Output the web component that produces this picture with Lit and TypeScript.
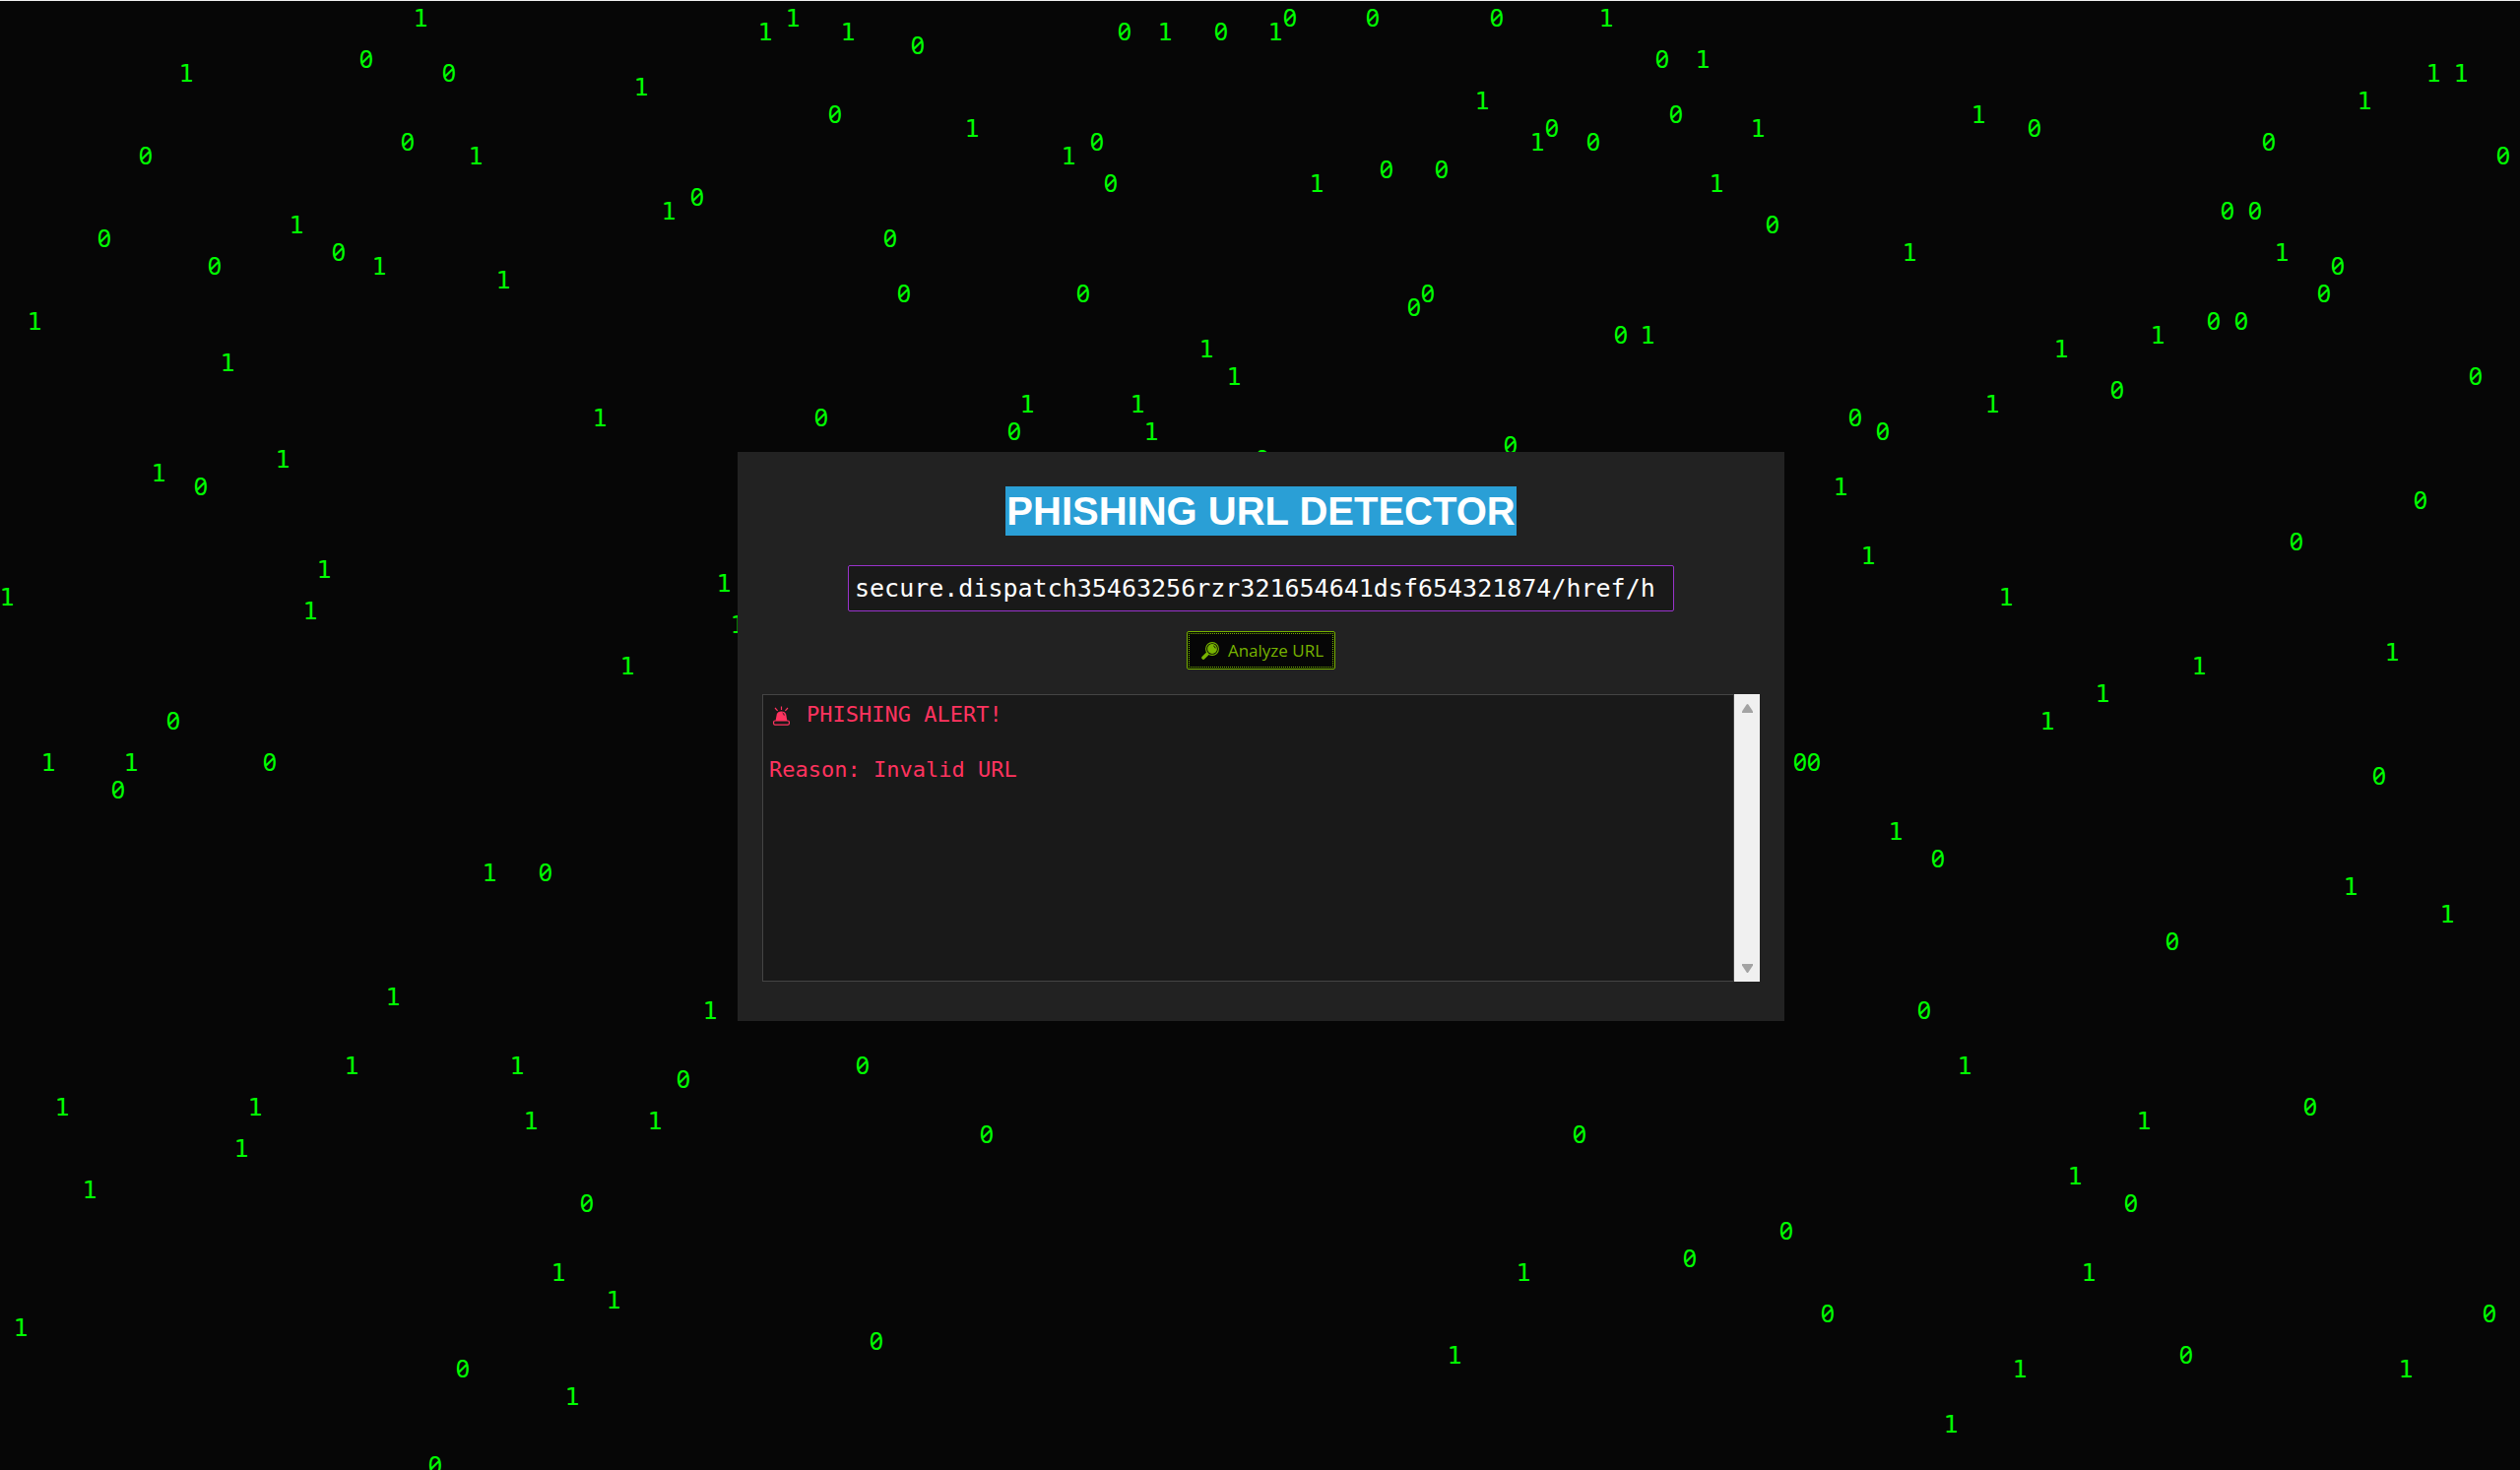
import { LitElement, html, css, svg } from "lit";
import { customElement, state, query } from "lit/decorators.js";

// Each entry is one falling digit: [column, row, digit], on a 14px lattice.
type Drop = [number, number, 0 | 1];

const CELL = 14;

const DROPS: Drop[] = [
  [0, 42, 1], [1, 95, 1], [2, 22, 1], [3, 54, 1], [4, 79, 1], [6, 85, 1], [7, 16, 0], [8, 56, 0],
  [9, 54, 1], [10, 10, 0], [11, 33, 1], [12, 51, 0], [13, 4, 1], [14, 34, 0], [15, 18, 0], [16, 25, 1],
  [17, 82, 1], [18, 79, 1], [19, 54, 0], [20, 32, 1], [21, 15, 1], [22, 43, 1], [23, 40, 1], [24, 17, 0],
  [25, 76, 1], [26, 3, 0], [27, 18, 1], [28, 71, 1], [29, 9, 0], [30, 0, 1], [31, 105, 0], [32, 4, 0],
  [33, 98, 0], [34, 10, 1], [35, 62, 1], [36, 19, 1], [37, 76, 1], [38, 80, 1], [39, 62, 0], [40, 91, 1],
  [41, 100, 1], [42, 86, 0], [43, 29, 1], [44, 93, 1], [45, 47, 1], [46, 5, 1], [47, 80, 1], [48, 14, 1],
  [49, 77, 0], [50, 13, 0], [51, 72, 1], [52, 41, 1], [53, 44, 1], [55, 1, 1], [57, 0, 1], [59, 29, 0],
  [60, 7, 0], [61, 1, 1], [62, 76, 0], [63, 96, 0], [64, 16, 0], [65, 20, 0], [66, 2, 0], [70, 8, 1],
  [71, 81, 0], [73, 30, 0], [74, 28, 1], [77, 10, 1], [78, 20, 0], [79, 9, 0], [80, 12, 0], [81, 1, 0],
  [82, 28, 1], [83, 30, 1], [84, 1, 1], [87, 24, 1], [88, 1, 0], [89, 26, 1], [91, 32, 0], [92, 1, 1],
  [93, 0, 0], [95, 12, 1], [99, 0, 0], [100, 11, 0], [102, 21, 0], [103, 20, 0], [104, 11, 0], [105, 97, 1],
  [107, 6, 1], [108, 0, 0], [109, 31, 0], [110, 91, 1], [111, 9, 1], [112, 8, 0], [114, 81, 0], [115, 9, 0],
  [116, 0, 1], [117, 23, 0], [119, 23, 1], [120, 3, 0], [121, 7, 0], [122, 90, 0], [123, 3, 1], [124, 12, 1],
  [127, 8, 1], [128, 15, 0], [129, 88, 0], [130, 54, 0], [131, 54, 0], [132, 94, 0], [133, 34, 1], [134, 29, 0],
  [135, 39, 1], [136, 30, 0], [137, 59, 1], [138, 17, 1], [139, 72, 0], [140, 61, 0], [141, 102, 1], [142, 76, 1],
  [143, 7, 1], [144, 28, 1], [145, 42, 1], [146, 98, 1], [147, 8, 0], [148, 51, 1], [149, 24, 1], [150, 84, 1],
  [151, 91, 1], [152, 49, 1], [153, 27, 0], [154, 86, 0], [155, 80, 1], [156, 23, 1], [157, 67, 0], [158, 97, 0],
  [159, 47, 1], [160, 22, 0], [161, 14, 0], [162, 22, 0], [163, 14, 0], [164, 9, 0], [165, 17, 1], [166, 38, 0],
  [167, 79, 0], [168, 20, 0], [169, 18, 0], [170, 63, 1], [171, 6, 1], [172, 55, 0], [173, 46, 1], [174, 98, 1],
  [175, 35, 0], [176, 4, 1], [177, 65, 1], [178, 4, 1], [179, 26, 0], [180, 94, 0], [181, 10, 0],
];

@customElement("digit-rain")
export class DigitRain extends LitElement {
  static styles = css`
    :host {
      display: block;
      position: absolute;
      inset: 0;
      overflow: hidden;
    }
    .canvas {
      display: block;
      width: 100%;
      height: 100%;
      fill: #00ff00;
      font-size: 25px;
      text-anchor: middle;
    }
    .zero {
      font-family: "Noto Sans", sans-serif;
      font-feature-settings: "zero";
    }
    .one {
      font-family: "DejaVu Sans Mono", monospace;
    }
  `;

  render() {
    return html`<svg class="canvas" aria-hidden="true">
      ${DROPS.map(
        ([col, row, digit]) =>
          svg`<text class=${digit ? "one" : "zero"} x=${col * CELL + (digit ? 7 : 8)} y=${row * CELL + 26}>${digit}</text>`
      )}
    </svg>`;
  }
}

@customElement("app-root")
export class AppRoot extends LitElement {
  static styles = css`
    :host {
      display: block;
    }
    * {
      box-sizing: border-box;
    }
    .stage {
      position: relative;
      display: grid;
      place-items: center;
      min-height: 100vh;
      padding: 2px 0 0 2px;
      overflow: hidden;
      background: #060606;
      border-top: 1px solid #f0f0f0;
    }
    .panel {
      position: relative;
      display: flex;
      flex-direction: column;
      align-items: center;
      width: 100%;
      max-width: 1063px;
      padding: 35px 25px 40px;
      background: #222222;
    }
    .title {
      margin: 0 0 30px;
      padding: 2px 1px;
      background: #2a9fd6;
      color: #ffffff;
      font: bold 40px/46px "Liberation Sans", Arial, sans-serif;
    }
    .url {
      width: 100%;
      max-width: 839px;
      height: 47px;
      margin-bottom: 20px;
      padding: 0 6px;
      border: 1px solid #9933cc;
      border-radius: 2px;
      outline: none;
      background: #191919;
      color: #ffffff;
      font: 25px/45px "DejaVu Sans Mono", monospace;
    }
    .analyze {
      position: relative;
      display: flex;
      align-items: center;
      gap: 9px;
      height: 39px;
      margin-bottom: 25px;
      padding: 0 11px 0 14px;
      border: 1px solid #77b300;
      border-radius: 2px;
      background: #060606;
      color: #77b300;
      font: 17px/24px "Open Sans", "Noto Sans", sans-serif;
      cursor: pointer;
    }
    .analyze::after {
      content: "";
      position: absolute;
      inset: 1px;
      border: 1px dotted #77b300;
    }
    .lens {
      width: 18px;
      height: 18px;
    }
    .result {
      position: relative;
      display: flex;
      align-self: stretch;
      height: 292px;
    }
    .log {
      flex: 1;
      min-width: 0;
      margin: 0;
      padding: 6px;
      border: 1px solid #444444;
      border-radius: 0;
      outline: none;
      resize: none;
      overflow: hidden;
      background: #191919;
      color: #ff335f;
      font: 22px/28px "DejaVu Sans Mono", monospace;
      text-indent: 38px;
    }
    .siren {
      position: absolute;
      left: 11px;
      top: 12px;
      width: 17px;
      height: 20px;
      color: #ff335f;
    }
    .track {
      display: flex;
      flex-direction: column;
      justify-content: space-between;
      width: 26px;
      background: #f0f0f0;
    }
    .step {
      display: grid;
      place-items: center;
      height: 28px;
      padding: 0;
      border: 0;
      background: none;
      color: #a3a3a3;
    }
    .arrow {
      width: 11px;
      height: 9px;
    }
  `;

  @state() private url = "secure.dispatch35463256rzr321654641dsf654321874/href/h";
  @state() private report = "PHISHING ALERT!\n\nReason: Invalid URL";
  @query(".log") private log!: HTMLTextAreaElement;

  private scrollLog(lines: number) {
    this.log.scrollTop += lines * 28;
  }

  render() {
    return html`
      <main class="stage">
        <digit-rain></digit-rain>
        <section class="panel">
          <h1 class="title">PHISHING URL DETECTOR</h1>
          <input
            class="url"
            type="text"
            aria-label="URL"
            spellcheck="false"
            .value=${this.url}
            @input=${(e: Event) => (this.url = (e.target as HTMLInputElement).value)}
          />
          <button class="analyze" type="button">
            <svg class="lens" viewBox="0 0 18 18" aria-hidden="true">
              <path d="M6.6 11.4 L2 16" stroke="currentColor" stroke-width="3.6" stroke-linecap="round" />
              <circle cx="11" cy="7" r="6.4" fill="#060606" stroke="currentColor" stroke-width="1.1" />
              <circle cx="11" cy="7" r="4.9" fill="currentColor" />
              <path d="M12.2 3.9 Q14 4.6 14.2 6.4" fill="none" stroke="#060606" stroke-width="0.9" />
            </svg>
            Analyze URL
          </button>
          <div class="result">
            <textarea class="log" readonly aria-label="Result" .value=${this.report}></textarea>
            <svg class="siren" viewBox="0 0 17 20" aria-hidden="true">
              <path
                d="M8.5 0.5 V4 M2 2 L4.6 4.8 M15 2 L12.4 4.8"
                fill="none"
                stroke="currentColor"
                stroke-width="1.2"
              />
              <path d="M2.6 15 L3.8 8.6 Q4.6 5.4 8.5 5.4 Q12.4 5.4 13.2 8.6 L14.4 15 Z" fill="currentColor" />
              <path d="M9.6 7 Q11.2 7.6 11.3 9.6" fill="none" stroke="#191919" stroke-width="0.9" />
              <rect x="0.6" y="15" width="15.8" height="4.2" rx="1.4" fill="#191919" stroke="currentColor" stroke-width="1.2" />
            </svg>
            <div class="track">
              <button class="step" type="button" aria-label="Scroll up" @click=${() => this.scrollLog(-1)}>
                <svg class="arrow" viewBox="0 0 11 9"><path d="M4.6 0.6 Q5.5 -0.4 6.4 0.6 L11 7.6 V9 H0 V7.6 Z" fill="currentColor" /></svg>
              </button>
              <button class="step" type="button" aria-label="Scroll down" @click=${() => this.scrollLog(1)}>
                <svg class="arrow" viewBox="0 0 11 9"><path d="M4.6 8.4 Q5.5 9.4 6.4 8.4 L11 1.4 V0 H0 V1.4 Z" fill="currentColor" /></svg>
              </button>
            </div>
          </div>
        </section>
      </main>
    `;
  }
}
